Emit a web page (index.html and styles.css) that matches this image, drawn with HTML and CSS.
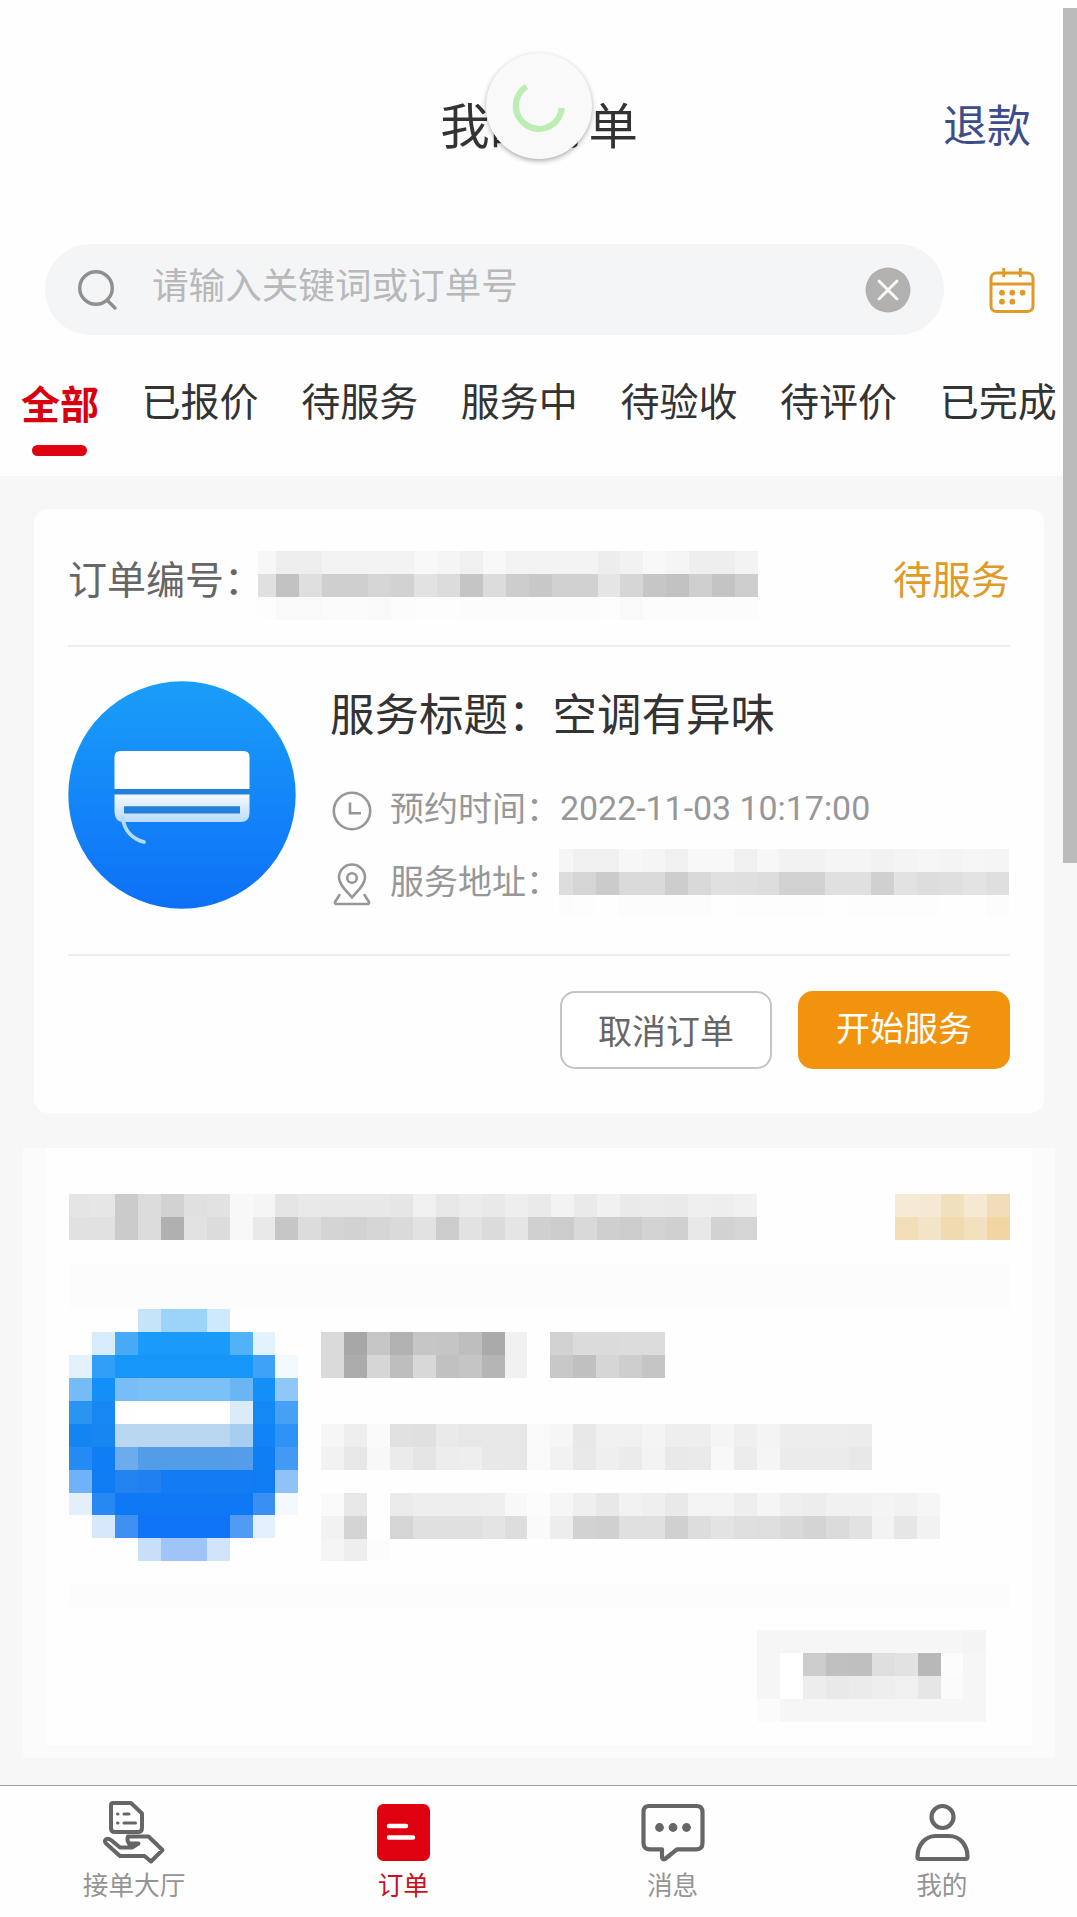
FILE: index.html
```html
<!DOCTYPE html>
<html lang="zh-CN">
<head>
<meta charset="utf-8">
<title>我的订单</title>
<link rel="stylesheet" href="styles.css">
</head>
<body>
<div class="app">
  <header class="top">
    <div class="navbar">
      <h1 class="title">我的订单</h1>
      <a class="refund">退款</a>
      <div class="loader">
        <svg width="106" height="106" viewBox="0 0 106 106" fill="none"><path d="M40.5 33.5A23 23 0 1 0 75.8 55" stroke="#bcedb2" stroke-width="6.2"/></svg>
      </div>
    </div>
    <div class="search-row">
      <div class="search">
        <svg class="glass" width="44" height="44" viewBox="0 0 44 44" fill="none" stroke="#8f8f8f" stroke-width="3.4" stroke-linecap="round"><circle cx="19" cy="20" r="16.3"/><path d="M30.5 32.5L38 40"/></svg>
        <span class="placeholder">请输入关键词或订单号</span>
        <svg class="clear" width="46" height="46" viewBox="0 0 46 46"><circle cx="23" cy="23" r="22.5" fill="#b3b1b0"/><path d="M14 14L32 32M32 14L14 32" stroke="#fff" stroke-width="2.8" stroke-linecap="round"/></svg>
      </div>
      <svg class="calendar" width="46" height="48" viewBox="0 0 46 48" fill="none" stroke="#e09a28" stroke-width="3"><rect x="2" y="7" width="42" height="38.5" rx="5.5"/><path d="M2 18H44M14.7 2V11M31.3 2V11"/><g fill="#e09a28" stroke="none"><circle cx="13" cy="26.7" r="2.9"/><circle cx="23.3" cy="26.7" r="2.9"/><circle cx="33.6" cy="26.7" r="2.9"/><circle cx="13" cy="35.7" r="2.9"/><circle cx="23.3" cy="35.7" r="2.9"/></g></svg>
    </div>
    <nav class="tabs">
      <span class="tab active">全部</span>
      <span class="tab">已报价</span>
      <span class="tab">待服务</span>
      <span class="tab">服务中</span>
      <span class="tab">待验收</span>
      <span class="tab">待评价</span>
      <span class="tab">已完成</span>
    </nav>
  </header>

  <main class="list">
    <section class="card">
      <div class="order-row">
        <span>订单编号：</span>
        <div class="mosaic order-no" data-crop="0.2" data-rows="f7 ee ee f3 f3 f3 f3 f8 f5 f0 f8 f3 f3 f3 f3 ed f2 f8 f5 ee ee f3|e0 c2 de cf cf d5 d2 e2 dc c5 dc cd c8 d1 d1 e5 d6 c6 c2 cf c4 ce|fd f9 f9 fb fb f9 fc fd fd fc fc fc fc fc fc fd f9 fc fc fc fc fc"></div>
        <span class="status">待服务</span>
      </div>
      <div class="body">
        <svg class="avatar" width="228" height="228" viewBox="0 0 228 228">
          <defs>
            <linearGradient id="sky" x1="0" y1="0" x2="0" y2="1"><stop offset="0" stop-color="#1a9ef9"/><stop offset="1" stop-color="#0d70f7"/></linearGradient>
            <linearGradient id="panel" x1="0" y1="0" x2="0" y2="1"><stop offset="0" stop-color="#f6faff"/><stop offset="1" stop-color="#b9dbfc"/></linearGradient>
          </defs>
          <circle cx="114" cy="114" r="113.7" fill="url(#sky)"/>
          <path d="M46.500 108H182V114H46.500Z" fill="#2280dd"/>
          <path d="M46.500 108V76Q46.500 70 52.500 70H175.500Q181.500 70 181.500 76V108Z" fill="#fff"/>
          <path d="M46.500 113.500H181.500V132Q181.500 141 172.500 141H56Q46.500 141 46.500 131Z" fill="url(#panel)"/>
          <path d="M56 125.200H172V132.500H56Z" fill="#2280dd"/>
          <path d="M54.500 136C56 150 65 158 76 161" fill="none" stroke="#b5daff" stroke-width="3.800" stroke-linecap="round"/>
        </svg>
        <div class="info">
          <div class="service">服务标题：空调有异味</div>
          <div class="line">
            <svg width="40" height="42" viewBox="0 0 40 42" fill="none" stroke="#979797" stroke-width="2.600"><circle cx="20" cy="21" r="18.200"/><path d="M18 12.500V23.300H29"/></svg>
            <span class="label">预约时间：</span><span class="date">2022-11-03 10:17:00</span>
          </div>
          <div class="line address">
            <svg width="40" height="44" viewBox="0 0 40 44" fill="none" stroke="#979797" stroke-width="2.600" stroke-linecap="round" stroke-linejoin="round"><path d="M20 35.500C15 29.500 7 23 7 15.500A13 13 0 0 1 33 15.500C33 23 25 29.500 20 35.500Z"/><circle cx="20" cy="16" r="4.800"/><path d="M7.500 33L3 40Q2.500 42 5 42H35Q37.500 42 37 40L32.500 33"/></svg>
            <span class="label">服务地址：</span>
            <div class="mosaic address-text" data-crop="0.39" data-rows="f6 f0 f0 f7 f5 f0 f8 f8 f0 f7 f2 f2 f5 f5 f2 f4 f6 f4 f6 f5|dd d5 cb da da cd d9 e0 df dd d2 d2 e0 e0 d0 e2 dd df e3 df|fc fd fe fc fc fc fc fe fd fd fd fd fe fd fd fd fd fe fe fc"></div>
          </div>
        </div>
      </div>
      <div class="actions">
        <button class="btn">取消订单</button>
        <button class="btn primary">开始服务</button>
      </div>
    </section>

    <section class="card masked">
      <div class="masked-head">
        <div class="mosaic" data-rows="e5 e6 cb dc d2 e0 e2 f8 f5 e5 e9 e8 e8 e8 e6 f0 e7 ec e9 ee ea f3 ea f1 ea eb ea ef ee f1|e1 e1 cb dc b0 e2 dc f8 e9 c6 dc d4 d2 d6 da e2 cc e2 db e5 d0 cc d9 cf cc d3 d0 e8 d2 d5"></div>
        <div class="mosaic" data-rows="f6ead2 f6e9d3 f1e0bd f6e8d3 f2ddba|f2dfb8 f3e4c8 f2dab0 f2e0bf f1d5a2"></div>
      </div>
      <div class="band tall"></div>
      <div class="masked-body">
        <div class="mosaic" data-rows="- - - c5e3f9 9bd4f8 9bd4f8 cdeafc - - -|- d6ecfa 46aaf6 1a9af9 1a9af9 1a9af9 1a9af9 52b2f7 e3f3fe -|e3f1fc 309ff7 1696f8 1696f8 1696f8 1696f8 1696f8 1696f8 3ea3f8 f3faff|74bbf7 148ff8 78bdf7 7bc0f7 7bc0f7 7bc0f7 7bc0f7 6ab5f3 148ff8 8fc7f8|2a94f3 1788f2 fe ff ff ff ff dcebf9 1488f5 46a1f4|1385f2 1786f2 b9d7f0 b9d7f0 b9d7f0 b9d7f0 b9d7f0 a7cef0 1184f5 2f93f5|248af4 0f7df4 6dacec 529ce8 529ce8 529ce8 529ce8 559de8 0f7df4 439af5|71b1f7 0f7cf4 2282ee 1f81f0 117cf4 117cf4 127df2 127df2 107cf4 8fc2f8|e3f0fc 2888f3 0f79f5 0f79f5 0f79f5 0f79f5 0f79f5 0f79f5 3a8ff4 f3f9ff|- d6e8f9 4090f2 0f74f5 0f74f5 0f74f5 0f74f5 529bf5 e3f0fd -|- - - c8dff8 9ec5f5 9ec5f5 d2e4f9 - - -"></div>
        <div class="masked-lines">
          <div class="mosaic" data-rows="da a7 c6 b1 c6 c5 be aa f1 - d2 db db dc dc|da ac d6 be d8 c1 c5 b5 f1 - c8 c0 d6 ce c5"></div>
          <div class="mosaic masked-time" data-rows="f6 ee fa e1 e0 ea e7 e8 e7 f9 f6 e8 f0 f0 f4 ee ee f5 ef f4 ed ed ed ec|f2 e7 f8 eb e5 ed ee e8 e7 f9 f2 e9 ef eb f3 e9 ea f8 ec f5 eb eb eb e8"></div>
          <div class="mosaic masked-address" data-rows="fa e7 - eb ee ee ee ef f8 fc f6 ef e8 f2 ef e9 f4 f4 ee f5 ef ed f1 f1 f4 f2 f6|f2 d4 - d5 e0 e0 e0 e4 dd fa ed d2 d0 e0 e0 d0 dd e3 df de d9 d4 db e2 f3 e6 f2|f5 ee fc - - - - - - - - - - - - - - - - - - - - - - - -"></div>
        </div>
      </div>
      <div class="band"></div>
      <div class="mosaic masked-button" data-rows="f6 f6 f6 f6 f6 f6 f6 f6 f6 f4|f6 ff cc c0 bf de e2 b8 fc f6|f6 ff ed e9 eb ee f0 e6 fb f6|fb f6 f6 f6 f6 f6 f6 f6 f6 f6"></div>
    </section>
  </main>

  <footer class="tabbar">
    <a class="item">
      <svg width="68" height="68" viewBox="0 0 68 68" fill="none" stroke="#666" stroke-width="4" stroke-linejoin="round" stroke-linecap="round"><path d="M13 4H31L42 14.500V29Q42 33 38 33H15Q11 33 11 29V6Q11 4 13 4Z"/><path d="M17.500 15H18M24 15H29M17.500 24H18M24 24H35.500" stroke-width="3"/><path d="M28 37.500H48.500L62.500 51L51 62.500L44.500 57H20L6 44.500C3 41 7 38 11 41L20 48.500H32L38.500 44.500H29Q26.500 41 28 37.500"/><path d="M29 44.500H38L32 48Z" fill="#666" stroke-width="2"/></svg>
      <span>接单大厅</span>
    </a>
    <a class="item on">
      <svg width="68" height="68" viewBox="0 0 68 68"><rect x="8" y="5" width="53" height="57" rx="6.500" fill="#df0010"/><path d="M20 27H37M20 38.500H44" stroke="#fff" stroke-width="4.500" stroke-linecap="round"/></svg>
      <span>订单</span>
    </a>
    <a class="item">
      <svg width="68" height="68" viewBox="0 0 68 68" fill="none" stroke="#666" stroke-width="4.200" stroke-linejoin="round"><path d="M10 7H57.500Q63.500 7 63.500 13V44Q63.500 50.300 57.500 50.300H38L26 60Q23 61 23 57.500V50.300H11Q4.500 50.300 4.500 44V13Q4.500 7 10 7Z"/><g fill="#666" stroke="none"><circle cx="20.500" cy="28.500" r="4.400"/><circle cx="34" cy="28.500" r="4.400"/><circle cx="47.500" cy="28.500" r="4.400"/></g></svg>
      <span>消息</span>
    </a>
    <a class="item">
      <svg width="68" height="68" viewBox="0 0 68 68" fill="none" stroke="#666" stroke-width="4.200" stroke-linejoin="round"><circle cx="34.500" cy="18" r="11"/><path d="M28 37H41C52 37 59.500 46 59.500 58Q59.500 60 57.500 60H11.500Q9.500 60 9.500 58C9.500 46 17 37 28 37Z"/></svg>
      <span>我的</span>
    </a>
  </footer>
  <div class="scrollbar"></div>
</div>
<script src="mosaic.js"></script>
</body>
</html>
```
FILE: styles.css
```css
* { box-sizing: border-box; }

body {
  margin: 0;
  background: #f7f7f7;
  color: #333;
  font-family: Roboto, "Noto Sans CJK SC", sans-serif;
}

.app {
  position: relative;
  display: flex;
  flex-direction: column;
  width: 1077px;
  height: 1917px;
  overflow: hidden;
}

.top {
  flex: none;
  height: 476px;
  background: #fefefe;
}

.navbar {
  position: relative;
  display: grid;
  grid-template-columns: 1fr auto 1fr;
  align-items: center;
  height: 244px;
  padding: 10px 46px 0 0;
}

.title {
  grid-column: 2;
  margin: 0 -47px 0 0;
  font-size: 49.4px;
  line-height: 60px;
  font-weight: 400;
}

.refund {
  justify-self: end;
  color: #3b4d8c;
  font-size: 44px;
  line-height: 60px;
}

.loader {
  position: absolute;
  left: 486px;
  top: 53px;
  width: 106px;
  height: 106px;
  border-radius: 50%;
  background: #f9f9f9;
  box-shadow: 0 2px 5px rgba(0, 0, 0, .32);
}

.search-row {
  display: flex;
  align-items: center;
  gap: 45px;
  height: 91px;
  padding-left: 45px;
}

.search {
  display: flex;
  align-items: center;
  width: 899px;
  height: 91px;
  padding: 0 33px 0 32px;
  border-radius: 46px;
  background: #f4f5f7;
}

.placeholder {
  flex: 1;
  margin: -6px 0 0 31px;
  color: #b8b8b8;
  font-size: 36.6px;
  line-height: 50px;
}

.tabs {
  display: flex;
  gap: 42.6px;
  height: 141px;
  padding: 47px 0 0 21px;
  overflow: hidden;
  white-space: nowrap;
}

.tab {
  flex: none;
  font-size: 39px;
  line-height: 42px;
}

.tab.active {
  display: flex;
  flex-direction: column;
  align-items: center;
  margin-top: 3px;
  color: #d9000f;
  font-weight: 700;
}

.tab.active::after {
  content: "";
  width: 55px;
  height: 11px;
  margin: 18px 2px 0 0;
  border-radius: 6px;
  background: #df0010;
}

.list {
  flex: 1;
  padding: 33px 22px 0 23px;
}

.card {
  width: 1010px;
  height: 604px;
  margin: 0 auto 0 11px;
  padding: 0 34px;
  border-radius: 14px;
  background: #fefefe;
}

.order-row {
  display: flex;
  align-items: flex-start;
  height: 136px;
  padding-top: 42px;
  color: #666;
  font-size: 39px;
  line-height: 60px;
}

.order-row > span:first-child { width: 189.500px; white-space: nowrap; }

.order-row .status {
  margin-left: auto;
  color: #e09a28;
}

.body {
  display: flex;
  gap: 34px;
  height: 311px;
  padding-top: 34px;
  border: solid #eee;
  border-width: 2px 0;
}

.avatar { flex: none; }

.service {
  margin-top: 3px;
  font-size: 44.5px;
  line-height: 64px;
}

.line {
  display: flex;
  align-items: center;
  height: 72px;
  margin-top: 27px;
  padding-left: 2px;
  color: #979797;
  font-size: 34px;
  line-height: 48px;
}

.line.address { margin-top: 1px; }

.label {
  width: 170px;
  margin: -4px 0 0 18px;
  white-space: nowrap;
}

.date {
  margin-top: -4px;
  font-size: 33.9px;
}

.address-text { margin: -2px 0 0 -1px; }

.actions {
  display: flex;
  justify-content: flex-end;
  gap: 26px;
  padding-top: 35px;
}

.btn {
  width: 212px;
  height: 78px;
  padding: 0 0 1px;
  border: 2px solid #c4c4c4;
  border-radius: 15px;
  background: #fff;
  color: #666;
  font: 34px/48px "Noto Sans CJK SC", sans-serif;
}

.btn.primary {
  padding-bottom: 6px;
  border-color: #f2930e;
  background: #f2930e;
  color: #fff;
}

.mosaic { flex: none; line-height: 0; }

.card.masked {
  width: 1032px;
  height: 610px;
  margin: 35px 0 0;
  padding: 46px 22px 0 23px;
  border: solid #fbfbfb;
  border-width: 0 23px 13px;
  border-radius: 0;
}

.masked-head {
  display: flex;
  justify-content: space-between;
}

.band {
  height: 23px;
  margin: 23px 0;
  background: #fcfcfc;
}

.band.tall {
  height: 45px;
  margin: 24px 0 0;
}

.masked-body {
  display: flex;
  gap: 23px;
}

.masked-lines { padding-top: 23px; }

.masked-time { margin-top: 46px; }

.masked-address { margin-top: 23px; }

.masked-button { width: max-content; margin: 0 24px 0 auto; }

.tabbar {
  display: flex;
  flex: none;
  height: 132px;
  border-top: 1px solid #9c9c9c;
  background: #fefefe;
}

.item {
  display: flex;
  flex: 1;
  flex-direction: column;
  align-items: center;
  padding: 13px 1px 0 0;
  color: #949494;
  font-size: 25.7px;
  line-height: 38px;
}

.item.on { color: #c9101c; }

.scrollbar {
  position: absolute;
  top: 8px;
  right: 0;
  width: 14px;
  height: 855px;
  background: #bababa;
}
```
FILE: mosaic.js
```js
// Draws the pixelated privacy masks: rows are separated by "|", cells by spaces.
// A cell is a grey level (two hex digits), an RGB colour, or "-" for empty.
const CELL = 22.94;

document.querySelectorAll('.mosaic').forEach((el) => {
  const rows = el.dataset.rows.split('|').map((row) => row.split(' '));
  const crop = Number(el.dataset.crop || 0);
  const cols = rows[0].length - crop;
  let rects = '';
  rows.forEach((row, y) => row.forEach((cell, x) => {
    if (cell === '-') return;
    const color = cell.length === 2 ? cell.repeat(3) : cell;
    rects += `<rect x="${x}" y="${y}" width="1" height="1" fill="#${color}"/>`;
  }));
  el.innerHTML = `<svg width="${cols * CELL}" height="${rows.length * CELL}" viewBox="${crop} 0 ${cols} ${rows.length}" preserveAspectRatio="none" shape-rendering="crispEdges">${rects}</svg>`;
});
```
